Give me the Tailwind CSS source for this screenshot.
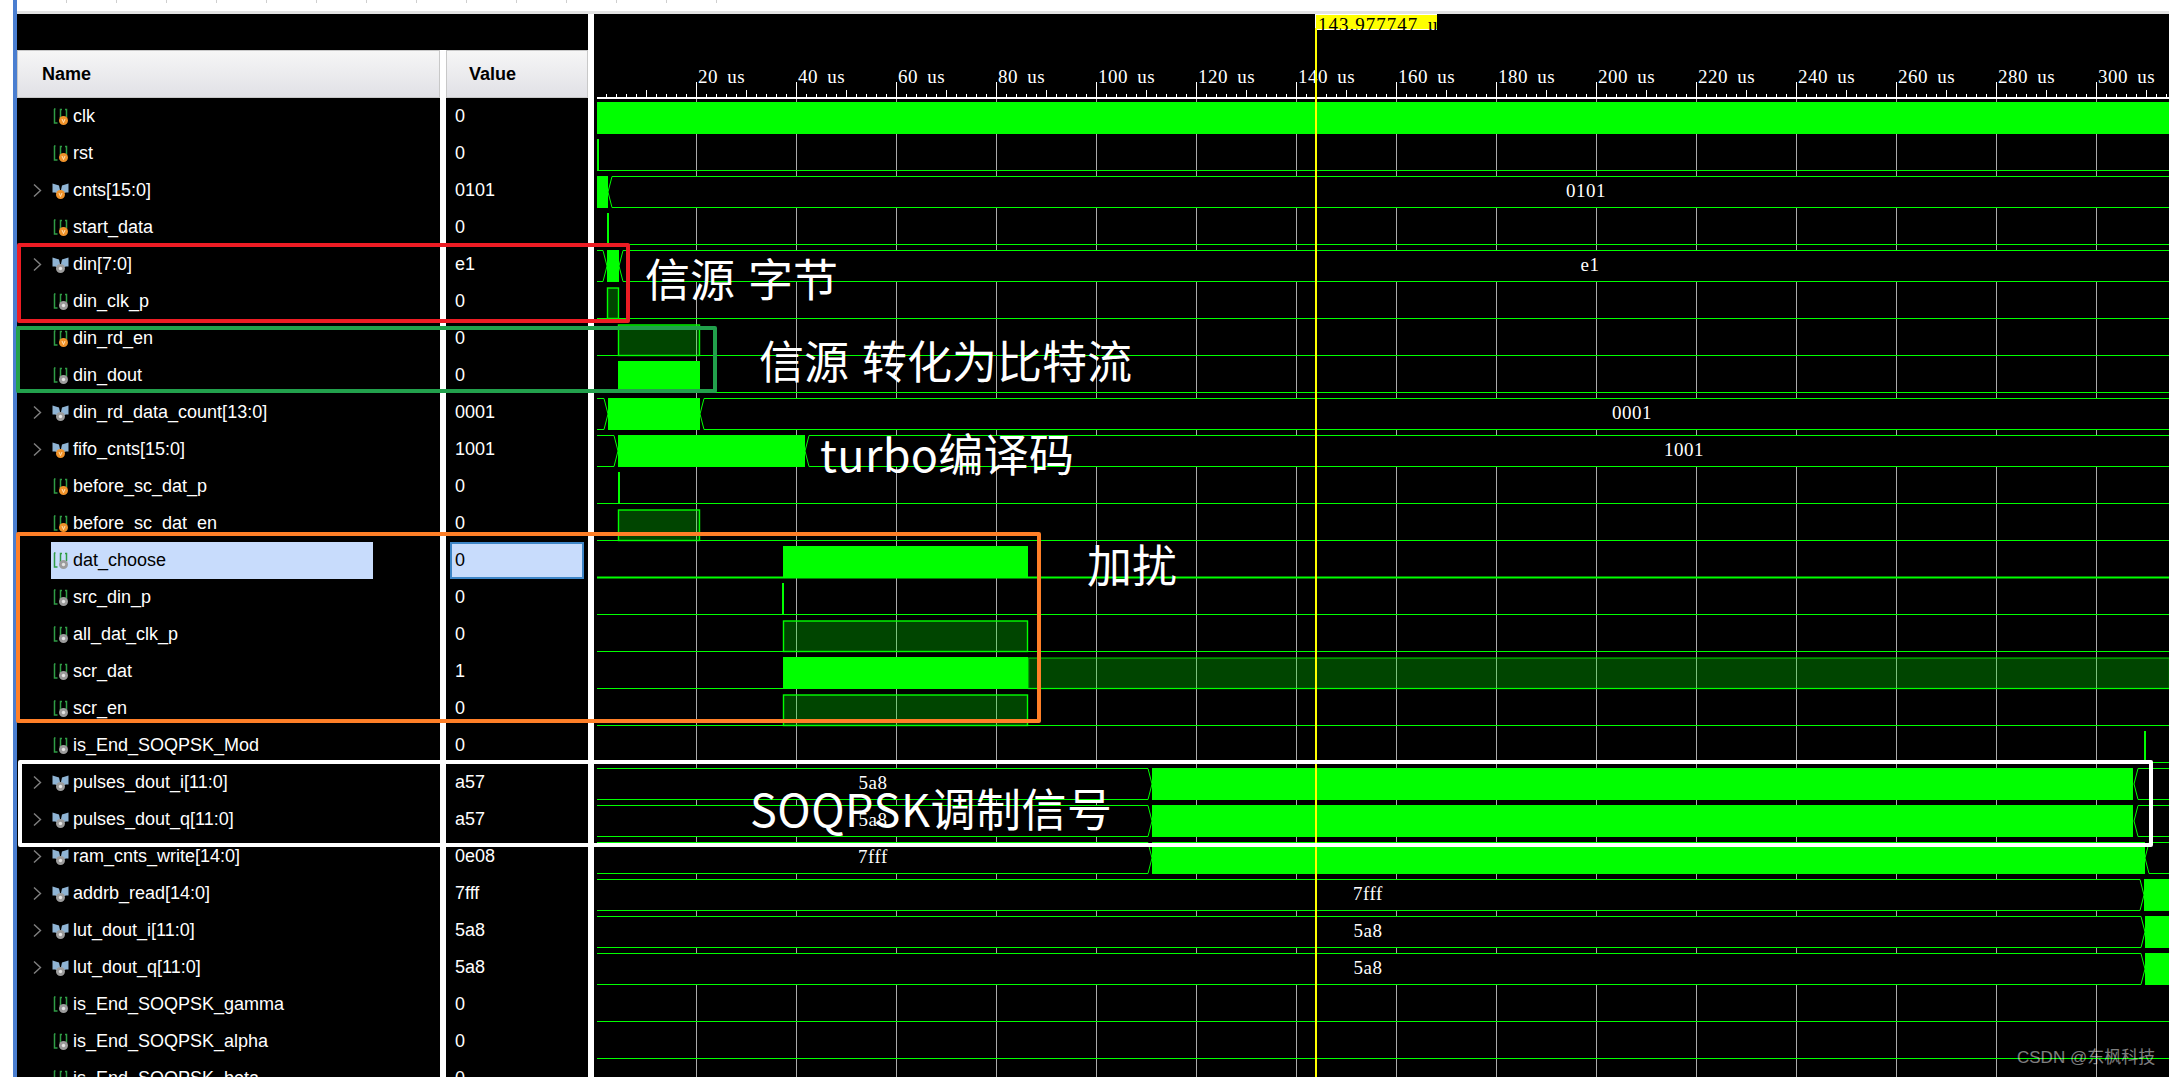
<!DOCTYPE html>
<html lang="en">
<head>
  <meta charset="UTF-8" />
  <title>Waveform</title>
  <script src="https://cdn.jsdelivr.net/npm/@tailwindcss/browser@4"></script>
</head>
<body class="bg-white">
  <div class="relative w-[2169px] h-[1077px] overflow-hidden bg-white font-['Liberation_Sans',sans-serif] flex pl-[13px]">
    <div class="w-[4px] h-full bg-[#4a7ed0] shrink-0"></div>

    <div class="flex-1 flex flex-col min-w-0">
      <!-- strip above the viewer -->
      <div class="h-[11px] flex items-start gap-[49px] pl-[49px]" id="ticks"></div>
      <div class="h-[3px] bg-[#e3e3e3]"></div>

      <div class="flex-1 flex min-h-0">
        <div class="w-[571px] shrink-0 flex flex-col">
          <div class="h-[36px] bg-black"></div>
          <div class="flex-1 flex min-h-0">
            <!-- name column -->
            <div class="w-[423px] bg-black shrink-0">
              <div class="h-[48px] flex items-center pl-[24px] border border-[#c8c8c8] bg-gradient-to-b from-[#f6f6f6] to-[#e1e1e6] text-[18px] font-bold text-black">Name</div>
              <div id="names"></div>
            </div>
            <div class="w-[6px] bg-white shrink-0"></div>
            <!-- value column -->
            <div class="w-[142px] bg-black shrink-0">
              <div class="h-[48px] flex items-center pl-[22px] border border-[#c8c8c8] bg-gradient-to-b from-[#f6f6f6] to-[#e1e1e6] text-[18px] font-bold text-black">Value</div>
              <div id="values"></div>
            </div>
          </div>
        </div>
        <div class="w-[6px] bg-white shrink-0"></div>
        <!-- waves -->
        <div class="flex-1 bg-black min-w-0">
          <svg id="waves" class="block" width="1575" height="1063" viewBox="594 14 1575 1063"></svg>
        </div>
      </div>
    </div>

    <!-- notes drawn over the screenshot -->
    <div class="absolute left-[17px] top-[243px] w-[613px] h-[80px] border-[4px] border-[#ed1c24] rounded-[2px]"></div>
    <div class="absolute left-[16px] top-[326px] w-[701px] h-[67px] border-[4px] border-[#22a04c] rounded-[2px]"></div>
    <div class="absolute left-[16px] top-[532px] w-[1025px] h-[191px] border-[4px] border-[#ff7f27] rounded-[2px]"></div>
    <div class="absolute left-[18px] top-[760px] w-[2135px] h-[87px] border-[4px] border-white rounded-[2px]"></div>

    <div class="absolute left-[645px] top-[255px] text-[45px] leading-none text-white font-['Noto_Sans_CJK_SC',sans-serif] whitespace-nowrap [word-spacing:3px]">信源 字节</div>
    <div class="absolute left-[759px] top-[337px] text-[45px] leading-none text-white font-['Noto_Sans_CJK_SC',sans-serif] whitespace-nowrap [word-spacing:3px]">信源 转化为比特流</div>
    <div class="absolute left-[820px] top-[430px] text-[45px] leading-none tracking-[0.3px] text-white font-['Noto_Sans_CJK_SC',sans-serif] whitespace-nowrap">turbo编译码</div>
    <div class="absolute left-[1087px] top-[541px] text-[45px] leading-none text-white font-['Noto_Sans_CJK_SC',sans-serif] whitespace-nowrap">加扰</div>
    <div class="absolute left-[750px] top-[785px] text-[45px] leading-none tracking-[0.5px] text-white font-['Noto_Sans_CJK_SC',sans-serif] whitespace-nowrap">SOQPSK调制信号</div>
    <div class="absolute left-[2017px] top-[1049px] text-[17px] leading-none text-white/50 font-['Liberation_Sans','Noto_Sans_CJK_SC',sans-serif] whitespace-nowrap">CSDN @东枫科技</div>
  </div>

  <script>
    // name, value, bus?, orange dot?
    const rows = [
      ['clk', '0', 0, 1], ['rst', '0', 0, 1], ['cnts[15:0]', '0101', 1, 1], ['start_data', '0', 0, 1],
      ['din[7:0]', 'e1', 1, 0], ['din_clk_p', '0', 0, 0], ['din_rd_en', '0', 0, 1], ['din_dout', '0', 0, 0],
      ['din_rd_data_count[13:0]', '0001', 1, 0], ['fifo_cnts[15:0]', '1001', 1, 1],
      ['before_sc_dat_p', '0', 0, 1], ['before_sc_dat_en', '0', 0, 1], ['dat_choose', '0', 0, 0],
      ['src_din_p', '0', 0, 0], ['all_dat_clk_p', '0', 0, 0], ['scr_dat', '1', 0, 0], ['scr_en', '0', 0, 0],
      ['is_End_SOQPSK_Mod', '0', 0, 0], ['pulses_dout_i[11:0]', 'a57', 1, 0], ['pulses_dout_q[11:0]', 'a57', 1, 0],
      ['ram_cnts_write[14:0]', '0e08', 1, 0], ['addrb_read[14:0]', '7fff', 1, 0], ['lut_dout_i[11:0]', '5a8', 1, 0],
      ['lut_dout_q[11:0]', '5a8', 1, 0], ['is_End_SOQPSK_gamma', '0', 0, 0], ['is_End_SOQPSK_alpha', '0', 0, 0],
      ['is_End_SOQPSK_beta', '0', 0, 0]
    ];
    const SELECTED = 12;

    function dot(orange, cx) {
      return orange
        ? `<circle cx="${cx}" cy="12.5" r="4.5" fill="#f0932b"/><path d="M${cx - 1.5} 11L${cx} 14.5L${cx + 1.5} 11" fill="none" stroke="#ffe9c4" stroke-width=".9"/>`
        : `<circle cx="${cx}" cy="12.5" r="4.5" fill="#9c9c9c"/><circle cx="${cx}" cy="12.5" r="1.7" fill="#e4e4e4"/>`;
    }
    const scalarIcon = o => `<svg width="16" height="18" viewBox="0 0 16 18" class="shrink-0"><path d="M1.5 1V15H4.5M1 1H2.5M7.5 10V1.5H9M13.5 9V1.5H12" fill="none" stroke="#2f9c45" stroke-width="1.5"/>${dot(o, 10.5)}</svg>`;
    const busIcon = o => `<svg width="17" height="18" viewBox="0 0 17 18" class="shrink-0 -ml-px"><path d="M0.5 1.5L7 3.5L8 8V12L3 10.5H0.5ZM16.5 1.5L10 3.5L9 8V12L14 10.5H16.5Z" fill="#8fb4d4"/>${dot(o, 8.5)}</svg>`;
    const chevron = `<svg width="9" height="13" viewBox="0 0 9 13"><path d="M1 0.5L7.5 6.5L1 12.5" fill="none" stroke="#808080" stroke-width="1.4"/></svg>`;

    document.getElementById('ticks').innerHTML = Array.from({ length: 14 }, () => '<div class="w-px h-[3px] bg-[#cfcfcf]"></div>').join('');

    document.getElementById('names').innerHTML = rows.map((r, i) => `
      <div class="h-[37px] flex items-center text-[18px]">
        <div class="w-[34px] h-full flex items-center pl-[16px] shrink-0">${r[2] ? chevron : ''}</div>
        <div class="w-[322px] h-full flex items-center gap-[4px] pl-[2px] ${i === SELECTED ? 'bg-[#c8dcfc] text-black' : 'text-white'}">
          ${r[2] ? busIcon(r[3]) : scalarIcon(r[3])}<span class="whitespace-nowrap">${r[0]}</span>
        </div>
      </div>`).join('');

    document.getElementById('values').innerHTML = rows.map((r, i) => i === SELECTED
      ? `<div class="h-[37px] ml-[4px] w-[134px] flex items-center pl-[3px] text-[18px] bg-[#c8dcfc] border-2 border-[#3d85c6] text-black"><span>${r[1]}</span></div>`
      : `<div class="h-[37px] flex items-center pl-[9px] text-[18px] text-white"><span>${r[1]}</span></div>`).join('');

    // waveform canvas, coordinates are page pixels
    const G = '#00ff00', L = 597, R = 2169;
    const top_ = i => 102.5 + 37 * i, bot = i => 133.5 + 37 * i;
    let s = '';
    const serif = `font-family="Liberation Serif" font-size="19" fill="#fff" letter-spacing="0.5"`;

    for (let x = 696; x <= 2096; x += 100) s += `<rect x="${x}" y="82" width="1" height="1000" fill="#aaa"/>`;
    for (let x = 606; x < R; x += 10) {
      const major = (x - 596) % 100 === 0, mid = (x - 596) % 50 === 0;
      if (!major) s += `<rect x="${x}" y="${mid ? 90 : 94}" width="1" height="${mid ? 8 : 4}" fill="#fff"/>`;
      else s += `<rect x="${x}" y="82" width="1" height="16" fill="#fff"/>`;
    }
    s += `<rect x="${L}" y="97" width="${R - L}" height="2" fill="#fff"/>`;
    for (let us = 20, x = 696; us <= 300; us += 20, x += 100)
      s += `<text x="${x + 2}" y="83" ${serif} word-spacing="4">${us} us</text>`;

    const line = (i, w = 1) => { s += `<rect x="${L}" y="${bot(i) - w / 2}" width="${R - L}" height="${w}" fill="${G}"/>`; };
    const bright = (a, b, i) => { s += `<rect x="${a}" y="${top_(i) - .5}" width="${b - a}" height="32" fill="${G}"/>`; };
    const dark = (a, b, i, edge = 1) => { s += `<rect x="${a + .5}" y="${top_(i) + .5}" width="${b - a}" height="30.5" fill="${G}" fill-opacity=".27" stroke="${G}" stroke-opacity="${edge}" stroke-width="1.4"/>`; };
    const spike = (x, i) => { s += `<rect x="${x}" y="${top_(i) - .5}" width="2" height="32" fill="${G}"/>`; };
    const bus = (a, b, i) => {
      const t = top_(i), d = bot(i), m = (t + d) / 2;
      const left = a <= L ? `M${a} ${t}` : `M${a} ${m}L${a + 4} ${t}`;
      const right = b >= R ? `L${b} ${t}M${b} ${d}` : `L${b - 4} ${t}L${b} ${m}L${b - 4} ${d}`;
      const bottom = a <= L ? `L${a} ${d}` : `L${a + 4} ${d}L${a} ${m}`;
      s += `<rect x="${a}" y="${t}" width="${b - a}" height="${d - t}" fill="#000" />`;
      s += `<path d="${left}${right}${bottom}" fill="none" stroke="${G}" stroke-width="1"/>`;
    };
    const label = (t, cx, i, sp = 0.5) => { s += `<text x="${cx}" y="${top_(i) + 20}" text-anchor="middle" ${serif} font-size="18" letter-spacing="${sp}">${t}</text>`; };

    [1, 3, 5, 6, 7, 10, 11, 13, 14, 15, 16, 17, 24, 25, 26].forEach(i => line(i));
    line(12, 2);

    bright(L, R, 0);
    spike(597, 1);
    bright(L, 608, 2); bus(608, R, 2); label('0101', 1586, 2);
    spike(607, 3);
    bus(L, 607, 4); bus(619, R, 4); bright(607, 619, 4); label('e1', 1590, 4);
    dark(607, 618, 5);
    dark(618, 699, 6);
    bright(618, 700, 7);
    bus(L, 608, 8); bus(700, R, 8); bright(608, 700, 8); label('0001', 1632, 8);
    bus(L, 618, 9); bus(805, R, 9); bright(618, 805, 9); label('1001', 1684, 9);
    spike(618, 10);
    dark(618, 699, 11);
    bright(783, 1028, 12);
    spike(782, 13);
    dark(783, 1027, 14);
    bright(783, 1028, 15); dark(1028, R, 15, .6);
    dark(783, 1027, 16);
    spike(2144, 17);
    [18, 19].forEach(i => { bus(L, 1152, i); bright(1152, 2133, i); bus(2134, R, i); label('5a8', 873, i); });
    bus(L, 1152, 20); bright(1152, 2145, 20); bus(2145, R, 20); label('7fff', 873, 20, 2.5);
    bus(L, 2144, 21); bright(2144, R, 21); label('7fff', 1368, 21, 2.5);
    bus(L, 2145, 22); bright(2145, R, 22); label('5a8', 1368, 22);
    bus(L, 2145, 23); bright(2145, R, 23); label('5a8', 1368, 23);

    // cursor and its time flag
    s += `<clipPath id="flag"><rect x="1315" y="14" width="122" height="16"/></clipPath>`;
    s += `<g clip-path="url(#flag)"><rect x="1315" y="14" width="122" height="16" fill="#fff"/><rect x="1316" y="15" width="121" height="14" fill="#ffff00"/>
      <text x="1318" y="31" font-family="Liberation Serif" font-size="19" letter-spacing="1" word-spacing="4" fill="#000">143.977747 u</text></g>`;
    s += `<rect x="1315" y="28" width="2" height="1050" fill="#ffff00"/>`;

    document.getElementById('waves').innerHTML = s;
  </script>
</body>
</html>
